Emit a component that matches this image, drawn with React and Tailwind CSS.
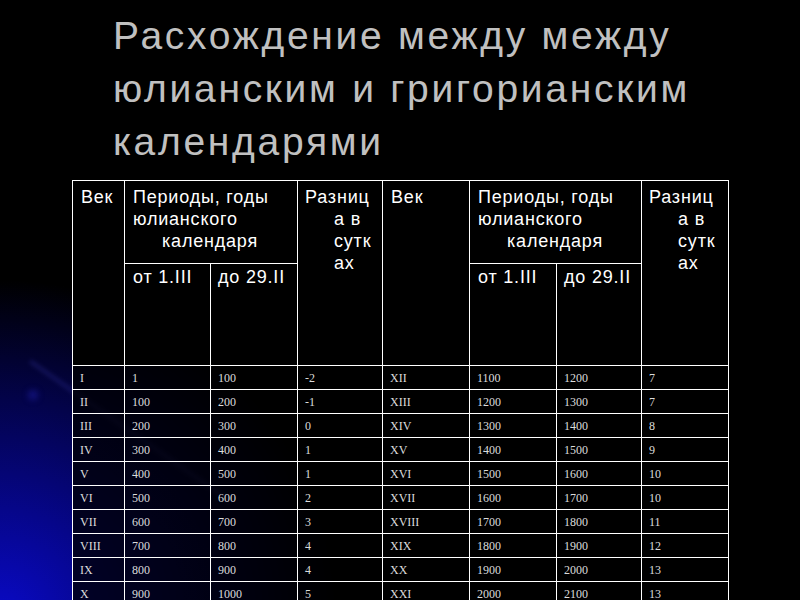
const rows = [
	['I', '1', '100', '-2', 'XII', '1100', '1200', '7'],
	['II', '100', '200', '-1', 'XIII', '1200', '1300', '7'],
	['III', '200', '300', '0', 'XIV', '1300', '1400', '8'],
	['IV', '300', '400', '1', 'XV', '1400', '1500', '9'],
	['V', '400', '500', '1', 'XVI', '1500', '1600', '10'],
	['VI', '500', '600', '2', 'XVII', '1600', '1700', '10'],
	['VII', '600', '700', '3', 'XVIII', '1700', '1800', '11'],
	['VIII', '700', '800', '4', 'XIX', '1800', '1900', '12'],
	['IX', '800', '900', '4', 'XX', '1900', '2000', '13'],
	['X', '900', '1000', '5', 'XXI', '2000', '2100', '13'],
]

const widths = [52, 86, 87, 85, 87, 87, 85, 87]

function HeaderTop() {
	return (
		<>
			<th rowSpan={2} className="border border-white bg-black px-[8px] pt-[5px] align-top text-left font-normal">Век</th>
			<th colSpan={2} className="h-[83px] border border-white bg-black pl-[8px] pt-[5px] align-top text-left font-normal">
				<div>Периоды, годы</div>
				<div>юлианского</div>
				<div className="pl-[29px]">календаря</div>
			</th>
			<th rowSpan={2} className="border border-white bg-black pl-[7px] pt-[5px] align-top text-left font-normal">
				<div>Разниц</div>
				<div className="pl-[29px]">а в</div>
				<div className="pl-[29px]">сутк</div>
				<div className="pl-[29px]">ах</div>
			</th>
		</>
	)
}

function HeaderSub() {
	return (
		<>
			<td className="border border-white bg-black pl-[8px] pt-[2px] align-top">от 1.III</td>
			<td className="border border-white bg-black pl-[7px] pt-[2px] align-top">до 29.II</td>
		</>
	)
}

export default function App() {
	return (
		<div className="relative h-[600px] w-[800px] overflow-hidden bg-black bg-[radial-gradient(circle_at_0_620px,#0a0ac8_0,#06068a_110px,#03034a_220px,#000_340px)]">
			<div className="pointer-events-none absolute left-[8px] top-[430px] h-[3px] w-[245px] rotate-[35deg] bg-[#2a2a90]/50 blur-[2px]"></div>
			<div className="pointer-events-none absolute left-[28px] top-[390px] h-[10px] w-[10px] rounded-full bg-[#1c1ca0]/60 blur-[3px]"></div>

			<h1 className="relative pl-[113px] pt-[9px] text-[39px] leading-[53px] tracking-[2.7px] text-[#c0c0c0] font-['Liberation_Sans',Arial,sans-serif]">
				<div>Расхождение между между</div>
				<div>юлианским и григорианским</div>
				<div>календарями</div>
			</h1>

			<table className="relative ml-[72px] mt-[12px] w-[656px] table-fixed border-collapse text-white">
				<colgroup>
					{widths.map((w, i) => (
						<col key={i} style={{ width: w }} />
					))}
				</colgroup>
				<thead className="text-[18px] leading-[22px] tracking-[0.8px] font-['Liberation_Sans',Arial,sans-serif]">
					<tr>
						<HeaderTop />
						<HeaderTop />
					</tr>
					<tr className="h-[102px]">
						<HeaderSub />
						<HeaderSub />
					</tr>
				</thead>
				<tbody className="text-[12px] text-[#dcdcdc] font-['Liberation_Serif','Times_New_Roman',serif]">
					{rows.map((r) => (
						<tr key={r[0]} className="h-[24px]">
							{r.map((c, i) => (
								<td key={i} className="border border-white bg-black/75 pl-[7px] align-middle">{c}</td>
							))}
						</tr>
					))}
				</tbody>
			</table>
		</div>
	)
}
